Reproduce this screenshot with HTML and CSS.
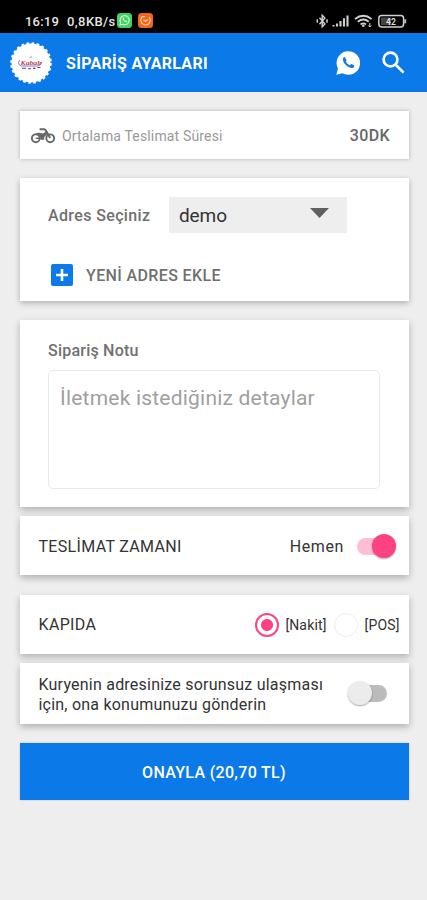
FILE: index.html
```html
<!DOCTYPE html>
<html lang="tr">
<head>
<meta charset="utf-8">
<meta name="viewport" content="width=device-width">
<title>Sipariş Ayarları</title>
<link rel="stylesheet" href="styles.css">
</head>
<body>
<div class="status">
  <span class="clock">16:19</span><span class="speed">0,8KB/s</span>
  <svg class="app" viewBox="0 0 15 15"><rect width="15" height="15" rx="3.5" fill="#43d162"/><path d="M3 12l.7-2.3a4.6 4.6 0 1 1 1.7 1.6z" fill="none" stroke="#d9f8df" stroke-width="1.1"/><path d="M5.5 5q.4 3.8 4.2 4.2l.5-1.2-1.3-.6-.6.5q-1-.5-1.4-1.5l.5-.6-.6-1.2z" fill="#d9f8df"/></svg>
  <svg class="app second" viewBox="0 0 15 15"><rect width="15" height="15" rx="3.5" fill="#f36519"/><path d="M4.2 3.8a4.7 4.7 0 1 0 7 .4M4 3.7h3.2M5.5 7l2 1.3 2.2-1.7" fill="none" stroke="#ffd2b8" stroke-width="1.3"/></svg>
  <svg class="signals" viewBox="0 0 92 16"><g fill="none" stroke="#d0d0d0">
    <path d="M3.5 4.8l5.4 6.2-2.7 2.8V2.2l2.7 2.8-5.4 6.2" stroke-width="1.4"/><path d="M1.3 6.3v3.4M11 6.3v3.4" stroke-width="1.5"/>
    <path d="M17.5 13.6v-1.6M21 13.6v-3.2M24.5 13.6V8M28 13.6V5.2M31.5 13.6V2.4" stroke-width="2.1"/>
    <path d="M39 6q8.3-6.5 16.6 0M41.8 8.8q5.5-4.4 11 0M44.6 11.4q2.7-2 5.4 0" stroke-width="1.9"/><path d="M53.8 10v4M52.2 12.4l1.6 1.6 1.6-1.6" stroke-width="1"/>
    <rect x="62.8" y="2.5" width="24.8" height="11.5" rx="3" stroke-width="1.5"/></g><circle cx="47.3" cy="12.8" r="1.3" fill="#d0d0d0"/><path d="M65 4.5h10v7.5H65z" fill="#444"/><path d="M88.2 6.3h2v4h-2z" fill="#bbb"/><text x="75" y="11.5" text-anchor="middle">42</text></svg>
</div>
<header class="bar">
  <svg class="logo" viewBox="0 0 42 42"><circle cx="21" cy="21" r="19.5" fill="#fff"/><circle cx="21" cy="21" r="19.8" fill="none" stroke="#fff" stroke-width="2" stroke-dasharray="2.7 2.48"/><path d="M9.5 18q-2.5 5 2 6h15q5-.3 5.2-4" fill="none" stroke="#8b78bd" stroke-width="1"/><text x="21" y="23" text-anchor="middle" textLength="21" lengthAdjust="spacingAndGlyphs">Kabalı</text><path d="M12 26.2h4M18 26.8h3M23 26.4h2.5M27.5 25.5h3" stroke="#454e9b" stroke-width="1.1"/><path d="M19.5 15.7l2.5-1" stroke="#b66b7d" stroke-width=".8"/></svg>
  <h1>SİPARİŞ AYARLARI</h1>
  <svg class="whatsapp" viewBox="0 0 24 24"><path d="M.3 23.8L2 17.6A11.8 11.8 0 1 1 6.5 22.2z" fill="#fff"/><path d="M8.8 6.2c-.5-.4-1.3.1-1.7 1-.7 2 .8 5 3.1 7.1 2.5 2.3 5.3 3.4 7 2.4 1-.6 1.2-1.7 1-2.3l-2.6-1.3c-.5-.1-.9.7-1.5 1.3-2.2-.8-3.6-2.3-4.4-3.8.5-.6 1-1 .8-1.6z" fill="#0b79e7"/></svg>
  <svg class="search" viewBox="0 0 23 23"><circle cx="8.5" cy="8.5" r="6.9"/><path d="M13.7 13.7l7.9 7.9"/></svg>
</header>
<main>
  <section class="card delivery">
    <svg class="moto" viewBox="0 0 24 16" fill="none" stroke="#686868"><circle cx="4.8" cy="10.3" r="3.9" stroke-width="1.9"/><circle cx="19.2" cy="10.3" r="3.9" stroke-width="1.9"/><path d="M8.6 1.2h4.6q1 0 1.5 1l4.5 7.8" stroke-width="2"/><path d="M4 6.2q3-2 5.8-1.2l2.2.5 3.6-2.4 1.2 2.5-3.6 3.6v2.6H9.6q.2-4-3-5.3z" fill="#686868" stroke="none"/><path d="M4.8 10.3h5" stroke-width="1.5"/></svg>
    <span>Ortalama Teslimat Süresi</span><strong>30DK</strong>
  </section>
  <section class="card address">
    <div class="pick"><b>Adres Seçiniz</b><div class="select"><span>demo</span><svg viewBox="0 0 19 10"><path d="M0 0h19L9.5 10z" fill="#606060"/></svg></div></div>
    <div class="add"><svg viewBox="0 0 22 22"><rect width="22" height="22" rx="2" fill="#0b79e7"/><path d="M11 5v12M5 11h12" stroke="#fff" stroke-width="2.6"/></svg><b>YENİ ADRES EKLE</b></div>
  </section>
  <section class="card note"><b>Sipariş Notu</b><div class="field"><span>İletmek istediğiniz detaylar</span></div></section>
  <section class="card option time"><span class="label">TESLİMAT ZAMANI</span><span class="now">Hemen</span><i class="switch on"></i></section>
  <section class="card option payment"><span class="label">KAPIDA</span><i class="radio checked"></i><span class="cash">[Nakit]</span><i class="radio"></i><span class="pos">[POS]</span></section>
  <section class="card option location"><p><span>Kuryenin adresinize sorunsuz ulaşması</span><br><span>için, ona konumunuzu gönderin</span></p><i class="switch"></i></section>
  <button><span>ONAYLA (20,70 TL)</span></button>
</main>
</body>
</html>
```
FILE: styles.css
```css
* { box-sizing: border-box; }
body { margin: 0; height: 900px; background: #eee; font-family: Roboto, "Noto Sans", sans-serif; color: #333; overflow: hidden; }
svg { display: block; flex: none; }
span, b, strong, h1 { white-space: nowrap; }
.status { height: 33px; background: #000; color: #e4e4e4; display: flex; align-items: center; padding: 9px 15px 0 25px; font-size: 13px; font-weight: 500; }
.clock { width: 42px; letter-spacing: .2px; }
.speed { width: 50px; letter-spacing: .4px; }
.app { width: 15px; height: 15px; margin-top: -1px; }
.second { margin-left: 6px; }
.signals { width: 92px; height: 16px; margin-left: auto; margin-right: 4px; }
.signals text { font-size: 8.5px; font-weight: 700; fill: #ddd; }
.bar { height: 59px; background: #0b79e7; color: #fff; display: flex; align-items: center; padding: 0 22px 0 10px; }
.logo { width: 42px; height: 42px; }
.logo text { font: italic bold 7px "Liberation Serif", serif; fill: #c14056; }
.bar h1 { margin: 2px auto 0 14px; font-size: 16px; font-weight: 700; letter-spacing: .3px; }
.whatsapp { width: 24px; height: 24px; margin-right: 22px; }
.search { width: 23px; height: 23px; fill: none; stroke: #fff; stroke-width: 2.7; }
main { padding: 19px 18.5px 0 19.5px; }
.card { background: #fff; box-shadow: 0 3px 7px #0004; }
.delivery { height: 48px; display: flex; align-items: center; padding: 1px 18.5px 0 11.5px; box-shadow: 0 0 4px #0004; margin-bottom: 19px; }
.moto { width: 24px; height: 16px; margin-right: 7px; }
.delivery span { font-size: 14px; letter-spacing: .16px; color: #999; }
.delivery strong { margin-left: auto; color: #666; font-size: 16px; font-weight: 500; letter-spacing: .35px; }
.address { height: 123px; margin-bottom: 19px; padding: 19px 28.5px; box-shadow: 0 2px 6px #0004; }
.address b, .note b { color: #707070; font-size: 16px; font-weight: 500; letter-spacing: .37px; }
.pick { height: 36px; display: flex; align-items: center; }
.select { margin-left: auto; margin-right: 33px; width: 178px; height: 36px; background: #eee; display: flex; align-items: center; padding: 0 18px 0 10px; font-size: 19px; letter-spacing: -.1px; }
.select svg { width: 19px; height: 10px; margin: -4px 0 0 auto; }
.add { display: flex; align-items: center; gap: 13px; padding-left: 3px; margin-top: 31px; }
.add svg { width: 22px; height: 22px; }
.note { height: 187px; padding: 21px 28.5px 18px; margin-bottom: 9px; }
.note b { display: block; line-height: 19px; letter-spacing: .22px; }
.field { height: 119px; margin-top: 10px; border: 1px solid #e9e9e9; border-radius: 5px; padding: 14px 11px; font-size: 21px; line-height: 26px; letter-spacing: .21px; color: #a0a0a0; }
.option { height: 59px; display: flex; align-items: center; padding: 0 12.5px 0 19px; font-size: 16px; letter-spacing: .32px; }
.option .label { margin-right: auto; }
.time { margin-bottom: 20px; padding-top: 2px; }
.now { margin-right: 13px; letter-spacing: .6px; }
.switch { width: 39px; height: 25px; position: relative; flex: none; }
.switch::before { content: ""; position: absolute; left: 4px; right: 0; top: 4px; height: 17px; border-radius: 9px; background: #bbb; }
.switch::after { content: ""; position: absolute; left: 0; top: 0; width: 24px; height: 24px; border-radius: 50%; background: #ececec; box-shadow: 0 1px 2px #0005; }
.switch.on::before { left: 0; right: 4px; background: #ffbed3; }
.switch.on::after { left: auto; right: 0; background: #fc4281; }
.payment { margin-bottom: 9px; padding-right: 9px; font-size: 14px; letter-spacing: .15px; }
.payment .label { font-size: 16px; letter-spacing: .35px; }
.radio { width: 24px; height: 24px; border: 1px solid #eee; border-radius: 50%; flex: none; }
.radio.checked { border: 2px solid #f84880; background: radial-gradient(circle, #fc4281 0 5.5px, #fff 6.5px); }
.cash { margin: 0 7px 0 6px; }
.pos { margin-left: 7px; }
.location { height: 61px; padding-right: 22px; letter-spacing: .22px; }
.location p { margin: 2px auto 0 0; line-height: 19.5px; }
button { display: block; width: 100%; height: 57px; margin: 19px 0 0; padding-top: 2px; border: 0; background: #0b79e7; color: #fff; font: 500 16px Roboto, sans-serif; letter-spacing: .32px; box-shadow: 0 0 2px #0003; }
```
